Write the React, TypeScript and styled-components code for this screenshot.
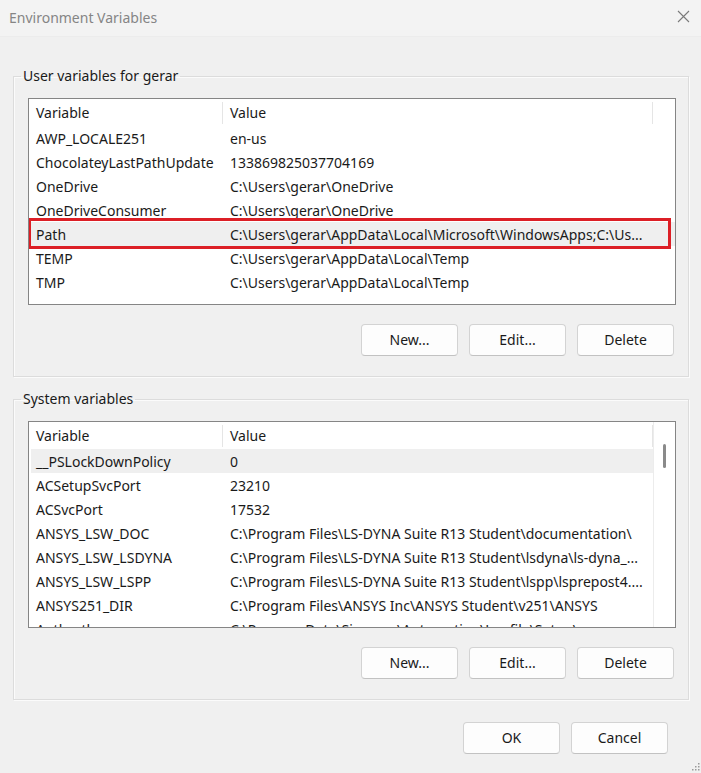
import React from 'react';
import styled, { createGlobalStyle } from 'styled-components';

const GlobalStyle = createGlobalStyle`
  html, body {
    margin: 0;
    padding: 0;
    background: #f0f0f0;
  }
  body {
    font-family: "Noto Sans", "Open Sans", "Liberation Sans", sans-serif;
    font-size: 14px;
    color: #1a1a1a;
  }
`;

interface Row {
    name: string;
    value: string;
    selected?: boolean;
    marked?: boolean;
}

const userRows: Row[] = [
    { name: 'AWP_LOCALE251', value: 'en-us' },
    { name: 'ChocolateyLastPathUpdate', value: '133869825037704169' },
    { name: 'OneDrive', value: 'C:\\Users\\gerar\\OneDrive' },
    { name: 'OneDriveConsumer', value: 'C:\\Users\\gerar\\OneDrive' },
    { name: 'Path', value: 'C:\\Users\\gerar\\AppData\\Local\\Microsoft\\WindowsApps;C:\\Us...', selected: true, marked: true },
    { name: 'TEMP', value: 'C:\\Users\\gerar\\AppData\\Local\\Temp' },
    { name: 'TMP', value: 'C:\\Users\\gerar\\AppData\\Local\\Temp' },
];

const systemRows: Row[] = [
    { name: '__PSLockDownPolicy', value: '0', selected: true },
    { name: 'ACSetupSvcPort', value: '23210' },
    { name: 'ACSvcPort', value: '17532' },
    { name: 'ANSYS_LSW_DOC', value: 'C:\\Program Files\\LS-DYNA Suite R13 Student\\documentation\\' },
    { name: 'ANSYS_LSW_LSDYNA', value: 'C:\\Program Files\\LS-DYNA Suite R13 Student\\lsdyna\\ls-dyna_...' },
    { name: 'ANSYS_LSW_LSPP', value: 'C:\\Program Files\\LS-DYNA Suite R13 Student\\lspp\\lsprepost4....' },
    { name: 'ANSYS251_DIR', value: 'C:\\Program Files\\ANSYS Inc\\ANSYS Student\\v251\\ANSYS' },
    { name: 'Authortheme', value: 'C:\\ProgramData\\Siemens\\Automation\\Logfile\\Setup\\' },
];

const App: React.FC = () => {
    return <Window>
        <GlobalStyle />
        <TitleBar>
            <Title>Environment Variables</Title>
            <CloseButton aria-label='Close'>
                <svg width="13" height="13" viewBox="0 0 13 13">
                    <path d="M1 1 L12 12 M12 1 L1 12" stroke="#7a7a7a" strokeWidth="1.1" fill="none" />
                </svg>
            </CloseButton>
        </TitleBar>

        <Content>
            <Group>
                <Legend>User variables for gerar</Legend>
                <VarList rows={userRows} />
                <ButtonRow>
                    <Button>New...</Button>
                    <Button>Edit...</Button>
                    <Button>Delete</Button>
                </ButtonRow>
            </Group>

            <Group>
                <Legend>System variables</Legend>
                <VarList rows={systemRows} scroll />
                <ButtonRow>
                    <Button>New...</Button>
                    <Button>Edit...</Button>
                    <Button>Delete</Button>
                </ButtonRow>
            </Group>

            <Footer>
                <Button>OK</Button>
                <Button>Cancel</Button>
            </Footer>
        </Content>

        <Grip>
            <svg width="10" height="10" viewBox="0 0 10 10">
                {[[8, 2], [8, 5], [5, 5], [8, 8], [5, 8], [2, 8]].map(([x, y]) =>
                    <rect key={`${x}-${y}`} x={x} y={y} width="1.5" height="1.5" fill="#9a9a9a" />
                )}
            </svg>
        </Grip>
    </Window>
}

const VarList: React.FC<{ rows: Row[]; scroll?: boolean }> = ({ rows, scroll }) => {
    return <ListBox>
        <ListMain $scroll={scroll}>
            <Header>
                <NameCell>Variable</NameCell>
                <HeaderValue>Value</HeaderValue>
                {!scroll && <HeaderRest />}
            </Header>
            <Rows>
                {rows.map(r => (
                    <ListRow key={r.name} $selected={r.selected}>
                        <NameCell>{r.name}</NameCell>
                        <ValueCell>{r.value}</ValueCell>
                        {r.marked && <Marker />}
                    </ListRow>
                ))}
            </Rows>
        </ListMain>
        {scroll && <ScrollTrack><Thumb /></ScrollTrack>}
    </ListBox>
}

const Window = styled.div`
  position: relative;
  width: 701px;
  height: 773px;
  display: flex;
  flex-direction: column;
  background: #f0f0f0;
  overflow: hidden;
`

const TitleBar = styled.div`
  height: 36px;
  display: flex;
  align-items: center;
  justify-content: space-between;
  padding: 0 11px 0 9px;
  background: #f3f3f3;
  border-bottom: 1px solid #ececec;
`

const Title = styled.div`
  color: #858585;
  font-size: 14px;
  padding-bottom: 2px;
`

const CloseButton = styled.div`
  display: flex;
  align-items: center;
  padding-bottom: 4px;
`

const Content = styled.div`
  display: flex;
  flex-direction: column;
  padding: 29px 12px 0 13px;
  gap: 12px;
`

const Group = styled.fieldset`
  margin: 0;
  min-width: 0;
  border: 1px solid #dcdcdc;
  box-shadow: inset 1px 1px 0 #fbfbfb, 1px 1px 0 #fbfbfb;
  padding: 12px 12px 20px 14px;
`

const Legend = styled.legend`
  margin-left: -7px;
  padding: 0 2px;
  line-height: 20px;
  font-size: 14px;
  color: #1a1a1a;
`

const ListBox = styled.div`
  height: 207px;
  box-sizing: border-box;
  border: 1px solid #858585;
  background: #fff;
  display: flex;
  overflow: hidden;
`

const ListMain = styled.div<{ $scroll?: boolean }>`
  flex: 1;
  min-width: 0;
  padding-right: ${p => p.$scroll ? '0' : '0'};
`

const Header = styled.div`
  height: 27px;
  display: flex;
  align-items: center;
`

const NameCell = styled.div`
  width: 193px;
  flex: none;
  box-sizing: border-box;
  padding-left: 7px;
  white-space: nowrap;
  overflow: hidden;
`

const HeaderValue = styled.div`
  width: 431px;
  flex: none;
  box-sizing: border-box;
  padding-left: 7px;
  border-left: 1px solid #e5e5e5;
  border-right: 1px solid #e5e5e5;
  height: 22px;
  line-height: 22px;
`

const HeaderRest = styled.div`
  flex: 1;
`

const Rows = styled.div`
  display: flex;
  flex-direction: column;
`

const ListRow = styled.div<{ $selected?: boolean }>`
  position: relative;
  height: 24px;
  display: flex;
  align-items: center;
  background: ${p => p.$selected ? '#efefef' : 'transparent'};
  margin-left: 2px;
  & > div:first-child {
    width: 191px;
    padding-left: 5px;
  }
`

const ValueCell = styled.div`
  flex: 1;
  min-width: 0;
  padding-left: 8px;
  white-space: nowrap;
  overflow: hidden;
  text-overflow: ellipsis;
`

const Marker = styled.div`
  position: absolute;
  left: -3px;
  right: 4px;
  top: -4px;
  bottom: -3px;
  border: 3px solid #dc1f26;
  pointer-events: none;
`

const ScrollTrack = styled.div`
  width: 21px;
  flex: none;
  border-left: 1px solid #ececec;
  padding-top: 22px;
  display: flex;
  justify-content: center;
`

const Thumb = styled.div`
  width: 3px;
  height: 24px;
  border-radius: 2px;
  background: #8a8a8a;
`

const ButtonRow = styled.div`
  display: flex;
  justify-content: flex-end;
  gap: 11px;
  margin-top: 19px;
  padding-right: 2px;
`

const Button = styled.button`
  width: 97px;
  height: 32px;
  box-sizing: border-box;
  border: 1px solid #d3d3d3;
  border-bottom-color: #c2c2c2;
  border-radius: 4px;
  background: #fdfdfd;
  font-family: inherit;
  font-size: 14px;
  color: #1a1a1a;
  padding: 0 0 2px;
`

const Footer = styled.div`
  display: flex;
  justify-content: flex-end;
  gap: 11px;
  margin-top: 10px;
  padding-right: 21px;
`

const Grip = styled.div`
  position: absolute;
  right: 1px;
  bottom: 2px;
  display: flex;
`

export default App;
